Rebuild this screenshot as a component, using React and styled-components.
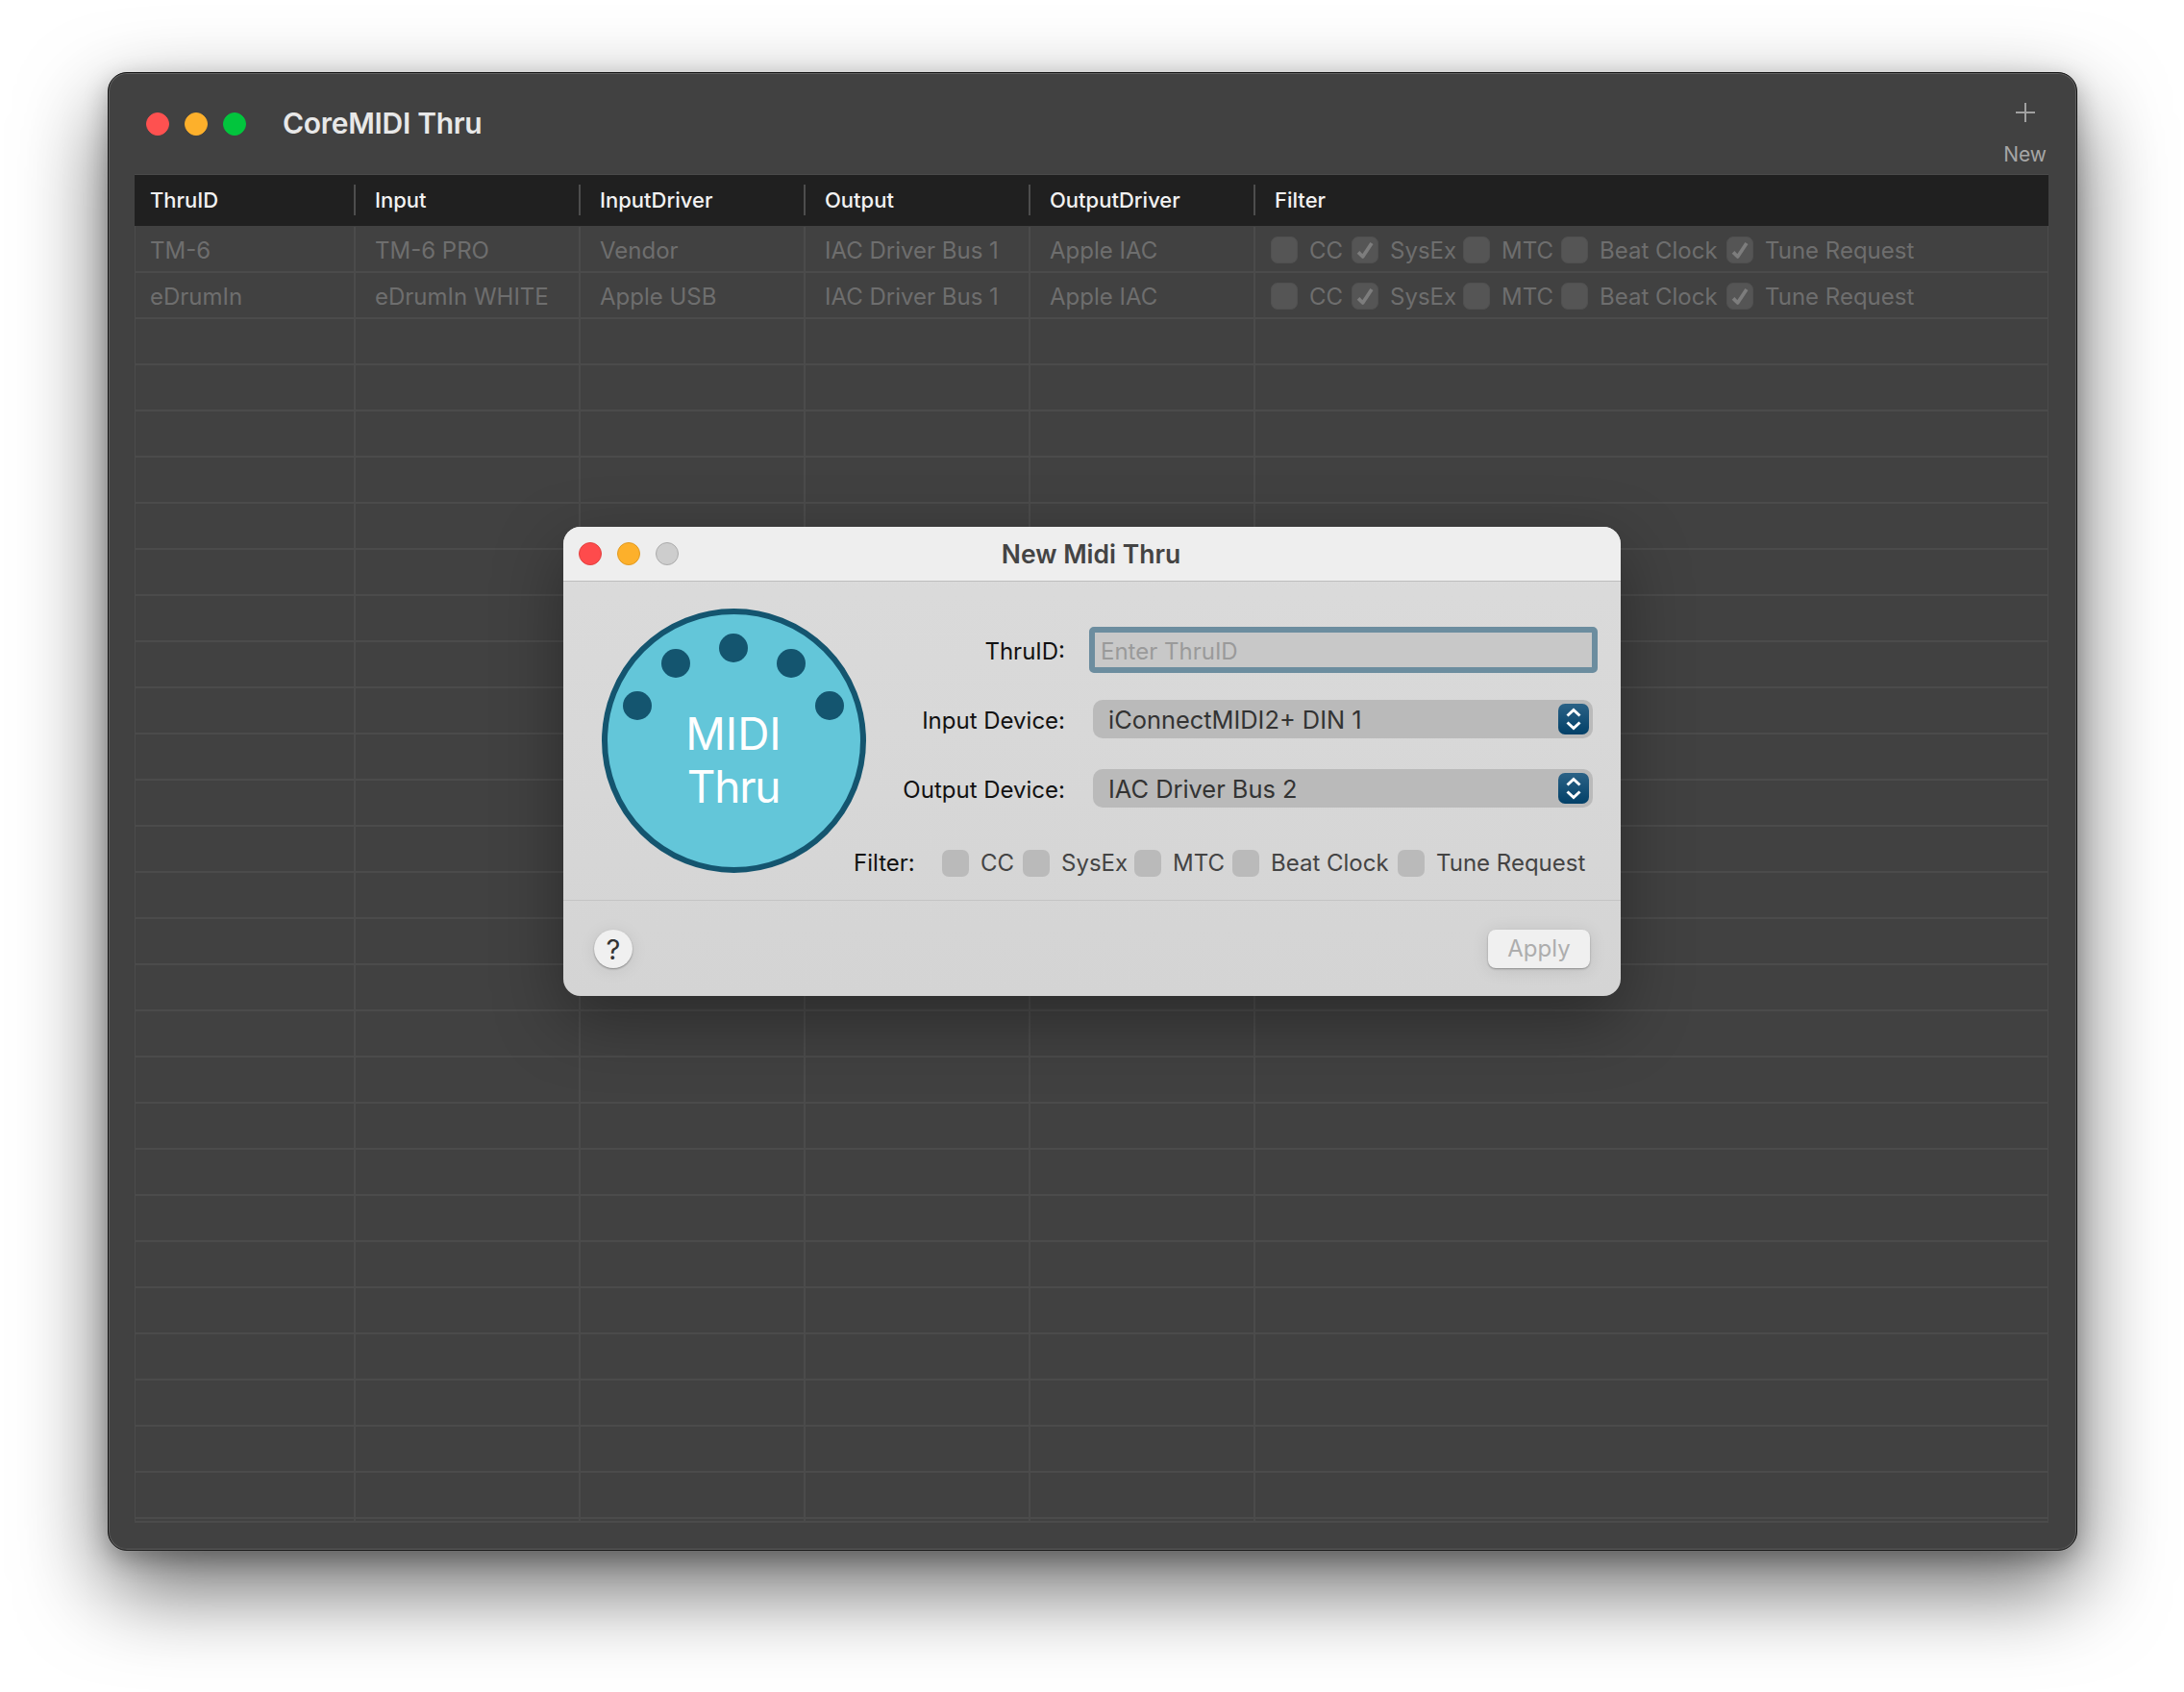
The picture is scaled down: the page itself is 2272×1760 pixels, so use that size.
import React from "react";
import styled, { createGlobalStyle } from "styled-components";

const GlobalStyle = createGlobalStyle`
  html, body {
    margin: 0;
    background: #fff;
  }
  * {
    box-sizing: border-box;
  }
`;

const Page = styled.div`
  width: 2272px;
  height: 1760px;
  padding: 75px 0 0 112px;
  overflow: hidden;
  font-family: Inter, "Liberation Sans", sans-serif;
`;

const Window = styled.div`
  position: relative;
  width: 2049px;
  height: 1538px;
  background: #414141;
  border: 1px solid #111;
  border-radius: 20px;
  box-shadow: inset 0 0 0 1px #626262, 0 38px 90px rgba(0, 0, 0, 0.6),
    0 8px 24px rgba(0, 0, 0, 0.25);
`;

const TitleBar = styled.div`
  display: flex;
  align-items: center;
  height: 105px;
  padding: 0 31px 0 39px;
`;

const Lights = styled.div`
  display: flex;
  gap: ${(props) => props.$gap}px;
`;

const Light = styled.span`
  display: block;
  width: 24px;
  height: 24px;
  border-radius: 50%;
  background: ${(props) => props.$color};
  border: 1px solid ${(props) => props.$edge || props.$color};
`;

const AppTitle = styled.h1`
  margin: 0 0 0 38px;
  padding-bottom: 1px;
  font-size: 30px;
  font-weight: 600;
  letter-spacing: -0.3px;
  color: #e8e8e8;
`;

const ToolButton = styled.div`
  display: flex;
  flex-direction: column;
  align-items: center;
  gap: 20px;
  margin: 30px 0 0 auto;
  align-self: flex-start;
  font-size: 21px;
  line-height: 26px;
  color: #a6a6a6;
`;

const Table = styled.div`
  margin: 0 29px 0 27px;
  height: 1403px;
  border-left: 1px solid #4b4b4b;
  border-right: 1px solid #4b4b4b;
  border-bottom: 2px solid #4b4b4b;
`;

const HeadRow = styled.div`
  display: grid;
  grid-template-columns: 228px 234px 234px 234px 234px 1fr;
  height: 54px;
  margin: 0 -1px 1px;
  background: #202020;
  border-top: 1px solid #4a4a4a;
`;

const HeadCell = styled.div`
  display: flex;
  align-items: center;
  height: 32px;
  margin-top: 10px;
  padding-left: ${(props) => (props.$first ? 16 : 20)}px;
  border-left: ${(props) => (props.$first ? "none" : "2px solid #4d4d4d")};
  font-size: 22px;
  font-weight: 500;
  color: #f2f2f2;
`;

const BodyRow = styled.div`
  display: grid;
  grid-template-columns: 227px 234px 234px 234px 234px 1fr;
  height: ${(props) => (props.$tail ? 2 : 48)}px;
  border-bottom: ${(props) => (props.$tail ? "none" : "2px solid #4b4b4b")};
`;

const BodyCell = styled.div`
  display: flex;
  align-items: center;
  padding: ${(props) => (props.$tail ? 0 : 2)}px 0 0 ${(props) => (props.$first ? 15 : 20)}px;
  border-left: ${(props) => (props.$first ? "none" : "2px solid #4b4b4b")};
  font-size: 24px;
  color: #6e6e6e;
`;

const FilterCell = styled(BodyCell)`
  padding-left: 16px;
`;

const FilterRow = styled.div`
  display: grid;
  grid-template-columns: 84px 116px 102px 172px auto;
  align-items: center;
  font-size: 24px;
  color: ${(props) => (props.$dim ? "#6e6e6e" : "#444")};
`;

const FilterItem = styled.label`
  display: flex;
  align-items: center;
  gap: 12px;
  white-space: nowrap;
`;

const CheckBox = styled.span`
  display: flex;
  align-items: center;
  justify-content: center;
  width: 28px;
  height: 28px;
  border-radius: 7px;
  background: ${(props) => (props.$dim ? "#555" : "#bababa")};
  border: ${(props) => (props.$dim ? "1px solid #505050" : "none")};
`;

const Dialog = styled.div`
  position: absolute;
  left: 473px;
  top: 472px;
  width: 1100px;
  height: 488px;
  border-radius: 18px;
  overflow: hidden;
  color: #111;
  background: linear-gradient(#dbdbdb, #d4d4d4);
`;

const DialogShadow = styled.div`
  position: absolute;
  left: 473px;
  top: 472px;
  width: 1100px;
  height: 488px;
  border-radius: 18px;
  box-shadow: 0 24px 70px rgba(0, 0, 0, 0.35);
`;

const DialogBar = styled.div`
  position: relative;
  display: flex;
  align-items: center;
  justify-content: center;
  height: 57px;
  padding-bottom: 1px;
  background: #eeeeee;
  border-bottom: 1px solid #bdbdbd;
`;

const DialogLights = styled.div`
  position: absolute;
  left: 16px;
  top: 16px;
`;

const DialogTitle = styled.h2`
  margin: 0 2px 0 0;
  font-size: 26.5px;
  font-weight: 600;
  color: #444;
`;

const DialogBody = styled.div`
  display: grid;
  grid-template-columns: 315px 1fr;
  grid-template-rows: 250px 28px;
  height: 331px;
  padding: 28px 0 0 40px;
`;

const LogoBox = styled.div`
  grid-column: 1;
  grid-row: 1 / 3;
  width: 275px;
  height: 275px;
`;

const Fields = styled.div`
  grid-column: 2;
  grid-row: 1;
  display: grid;
  grid-template-columns: 207px 520px;
  grid-auto-rows: 72px;
  column-gap: 29px;
  align-items: center;
  margin: 7px 0 0 -40px;
`;

const FieldLabel = styled.div`
  padding-top: 2px;
  text-align: right;
  font-size: 24px;
  color: #111;
`;

const TextField = styled.input`
  width: 529px;
  height: 48px;
  margin-left: -4px;
  padding: 2px 6px 0;
  border: 6px solid #6c8d9f;
  border-radius: 5px;
  outline: none;
  background: #c8c8c8;
  font-family: inherit;
  font-size: 24px;
  color: #333;

  &::placeholder {
    color: #9a9a9a;
    opacity: 1;
  }
`;

const Select = styled.div`
  display: flex;
  align-items: center;
  justify-content: space-between;
  height: 40px;
  padding: 0 4px 0 16px;
  border-radius: 10px;
  background: #bababa;
  font-size: 25.4px;
  color: #333;
`;

const Stepper = styled.span`
  display: flex;
  align-items: center;
  justify-content: center;
  width: 32px;
  height: 32px;
  border-radius: 7px;
  background: linear-gradient(#2b6286, #024068);
`;

const FilterLine = styled.div`
  grid-column: 1 / 3;
  grid-row: 2;
  display: grid;
  grid-template-columns: 92px auto;
  align-items: center;
  margin-left: 262px;
`;

const FilterLabel = styled.div`
  font-size: 24px;
  color: #111;
`;

const DialogFoot = styled.div`
  display: flex;
  align-items: flex-start;
  justify-content: space-between;
  height: 100px;
  padding: 30px 32px;
  border-top: 1px solid #c4c4c4;
`;

const HelpButton = styled.button`
  width: 40px;
  height: 40px;
  padding: 0;
  border: none;
  border-radius: 50%;
  background: #f0f0f0;
  font-family: inherit;
  font-size: 29px;
  color: #333;
  box-shadow: 0 1px 2px rgba(0, 0, 0, 0.35), 0 2px 18px rgba(0, 0, 0, 0.08);
`;

const ApplyButton = styled.button`
  width: 106px;
  height: 40px;
  padding: 0 0 1px;
  border: none;
  border-radius: 8px;
  background: #f0f0f0;
  font-family: inherit;
  font-size: 24px;
  color: #adadad;
  box-shadow: 0 1px 2px rgba(0, 0, 0, 0.3), 0 2px 18px rgba(0, 0, 0, 0.1);
`;

const Plus = () => (
  <svg width="22" height="22" viewBox="0 0 22 22">
    <path d="M11 1v20M1 11h20" stroke="#a0a0a0" strokeWidth="2" fill="none" />
  </svg>
);

const Check = () => (
  <svg width="28" height="28" viewBox="0 0 28 28">
    <path
      d="M6.5 16.5 L11.5 21.5 L21.5 6.5"
      stroke="#7d7d7d"
      strokeWidth="4"
      strokeLinejoin="round"
      fill="none"
    />
  </svg>
);

const Chevrons = () => (
  <svg width="32" height="32" viewBox="0 0 32 32">
    <path
      d="M9.5 12.5 L16 6.5 L22.5 12.5 M9.5 19.5 L16 25.5 L22.5 19.5"
      stroke="#fff"
      strokeWidth="3"
      fill="none"
    />
  </svg>
);

const dots = [
  [37, 101],
  [77, 57],
  [137, 41],
  [197, 57],
  [237, 101],
];

const LogoText = styled.text`
  font-family: Inter, sans-serif;
  font-size: 46px;
  fill: #fff;
  text-anchor: middle;
  letter-spacing: ${(props) => props.$tight || 0}px;
`;

const MidiLogo = () => (
  <svg width="275" height="275" viewBox="0 0 275 275">
    <circle cx="137.5" cy="137.5" r="134.5" fill="#63c6d9" stroke="#14556f" strokeWidth="6" />
    {dots.map(([cx, cy]) => (
      <circle key={cx} cx={cx} cy={cy} r="15" fill="#14556f" />
    ))}
    <LogoText x="137" y="147">
      MIDI
    </LogoText>
    <LogoText x="137" y="202" $tight={-1.2}>
      Thru
    </LogoText>
  </svg>
);

const headers = ["ThruID", "Input", "InputDriver", "Output", "OutputDriver", "Filter"];

const thrus = [
  ["TM-6", "TM-6 PRO", "Vendor", "IAC Driver Bus 1", "Apple IAC"],
  ["eDrumIn", "eDrumIn WHITE", "Apple USB", "IAC Driver Bus 1", "Apple IAC"],
];

const filterNames = ["CC", "SysEx", "MTC", "Beat Clock", "Tune Request"];

const Filters = ({ checked = [], dim }) => (
  <FilterRow $dim={dim}>
    {filterNames.map((name) => (
      <FilterItem key={name}>
        <CheckBox $dim={dim}>{checked.includes(name) && <Check />}</CheckBox>
        {name}
      </FilterItem>
    ))}
  </FilterRow>
);

const emptyRows = Array.from({ length: 26 }, (_, i) => i);

const App = () => (
  <Page>
    <GlobalStyle />
    <Window>
      <TitleBar>
        <Lights $gap={16}>
          <Light $color="#fe5150" />
          <Light $color="#fdb02b" />
          <Light $color="#02c53d" />
        </Lights>
        <AppTitle>CoreMIDI Thru</AppTitle>
        <ToolButton>
          <Plus />
          New
        </ToolButton>
      </TitleBar>
      <Table>
        <HeadRow>
          {headers.map((name, i) => (
            <HeadCell key={name} $first={i === 0}>
              {name}
            </HeadCell>
          ))}
        </HeadRow>
        {thrus.map((thru) => (
          <BodyRow key={thru[0]}>
            {thru.map((value, i) => (
              <BodyCell key={i} $first={i === 0}>
                {value}
              </BodyCell>
            ))}
            <FilterCell>
              <Filters dim checked={["SysEx", "Tune Request"]} />
            </FilterCell>
          </BodyRow>
        ))}
        {emptyRows.map((row) => (
          <BodyRow key={row}>
            {headers.map((name, i) => (
              <BodyCell key={name} $first={i === 0} />
            ))}
          </BodyRow>
        ))}
        <BodyRow $tail>
          {headers.map((name, i) => (
            <BodyCell key={name} $first={i === 0} $tail />
          ))}
        </BodyRow>
      </Table>
      <DialogShadow />
      <Dialog>
        <DialogBar>
          <DialogLights>
            <Lights $gap={16}>
              <Light $color="#fe4b4c" $edge="#e2403f" />
              <Light $color="#fdb02b" $edge="#e09a22" />
              <Light $color="#cdcdcd" $edge="#ababab" />
            </Lights>
          </DialogLights>
          <DialogTitle>New Midi Thru</DialogTitle>
        </DialogBar>
        <DialogBody>
          <LogoBox>
            <MidiLogo />
          </LogoBox>
          <Fields>
            <FieldLabel>ThruID:</FieldLabel>
            <TextField readOnly placeholder="Enter ThruID" />
            <FieldLabel>Input Device:</FieldLabel>
            <Select>
              iConnectMIDI2+ DIN 1
              <Stepper>
                <Chevrons />
              </Stepper>
            </Select>
            <FieldLabel>Output Device:</FieldLabel>
            <Select>
              IAC Driver Bus 2
              <Stepper>
                <Chevrons />
              </Stepper>
            </Select>
          </Fields>
          <FilterLine>
            <FilterLabel>Filter:</FilterLabel>
            <Filters />
          </FilterLine>
        </DialogBody>
        <DialogFoot>
          <HelpButton>?</HelpButton>
          <ApplyButton>Apply</ApplyButton>
        </DialogFoot>
      </Dialog>
    </Window>
  </Page>
);

export default App;
